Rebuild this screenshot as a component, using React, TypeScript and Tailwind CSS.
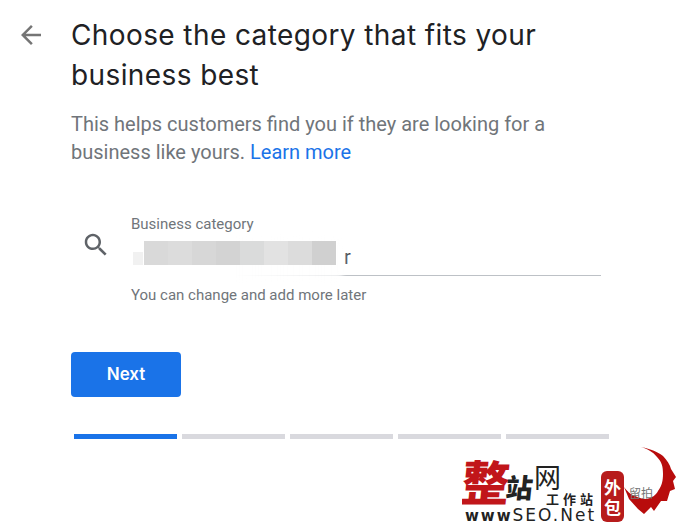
import React from "react";

const mosaicColors = [
  "bg-[#d9d9d9]",
  "bg-[#dcdcdc]",
  "bg-[#d7d7d7]",
  "bg-[#d3d3d3]",
  "bg-[#dadbdb]",
  "bg-[#e2e2e2]",
  "bg-[#dcdcdc]",
  "bg-[#d0d0d0]",
];

const steps = [true, false, false, false, false];

function Watermark() {
  return (
    <div className="absolute left-[462px] top-[446px] h-[79px] w-[214px] overflow-hidden">
      <span className="absolute left-[0px] top-[4px] -skew-x-6 font-['Noto_Sans_CJK_SC',serif] text-[48px] leading-[60px] font-black text-[#c1161a]">
        整
      </span>
      <span className="absolute left-[44px] top-[26px] -skew-x-6 font-['Noto_Sans_CJK_SC',serif] text-[27px] leading-[30px] font-black text-[#222]">
        站
      </span>
      <span className="absolute left-[72px] top-[15px] font-['Noto_Sans_CJK_SC',serif] text-[27px] leading-[32px] font-normal text-[#222]">
        网
      </span>
      <span className="absolute left-[84px] top-[45px] font-['Noto_Sans_CJK_SC',serif] text-[13px] leading-[16px] font-bold tracking-[4px] whitespace-nowrap text-[#222]">
        工作站
      </span>
      <span className="absolute left-[3px] top-[60px] font-['DejaVu_Sans',sans-serif] text-[17px] leading-[19px] tracking-[2px] whitespace-nowrap text-[#222]">
        <span className="text-[15px] font-bold">www</span>SEO.Net
      </span>
      <svg className="absolute left-[145px] top-[0px]" width="69" height="76" viewBox="0 0 69 76">
        <path
          d="M34 1 C44 3 51 6 56 10 C60 14 63 19 64 23 L69 31 L66 35 L68 43 L63 45 L60 55 L54 55 L47 65 L44 61 L37 68 L31 63 L22 53 L17 41 C20 45 24 49 28 50 C32 52 36 53 39 53 C45 52 49 49 51 45 C55 40 56 34 56 28 C56 21 55 16 50 11 C46 6 41 3 34 1 Z"
          fill="#b80c0c"
        />
      </svg>
      <div className="absolute left-[139px] top-[25px] flex h-[51px] w-[23px] flex-col items-center justify-center rounded-[6px] bg-[#b71c1c] font-['Noto_Sans_CJK_SC',sans-serif] text-[17px] leading-[20px] font-bold text-white">
        <span>外</span>
        <span>包</span>
      </div>
      <span className="absolute left-[167px] top-[40px] font-['Noto_Sans_CJK_SC',sans-serif] text-[12px] leading-[14px] whitespace-nowrap text-[#777]">
        留拍
      </span>
    </div>
  );
}

export default function App() {
  return (
    <div className="relative h-[529px] w-[682px] overflow-hidden bg-white font-['Roboto',sans-serif]">
      <div className="flex pt-[15px] pl-[16px]">
        <div className="w-[55px] pt-[5px]">
          <svg className="h-[30px] w-[30px] fill-[#757575]" viewBox="0 0 24 24">
            <path d="M20 11H7.83l5.59-5.59L12 4l-8 8 8 8 1.41-1.41L7.83 13H20v-2z" />
          </svg>
        </div>

        <div className="w-[540px]">
          <h1 className="font-['Inter',sans-serif] text-[28px] leading-[40px] font-normal tracking-[0.4px] text-[#202124]">
            Choose the category that fits your
            <br />
            business best
          </h1>

          <p className="mt-[15px] text-[20px] leading-[28px] text-[#70757a]">
            This helps customers find you if they are looking for a
            <br />
            business like yours. <span className="text-[#1a73e8]">Learn more</span>
          </p>

          {/* Category field */}
          <div className="mt-[48px] flex">
            <div className="w-[60px] pt-[16px] pl-[10px]">
              <svg className="h-[30px] w-[30px] fill-[#5f6368]" viewBox="0 0 24 24">
                <path d="M15.5 14h-.79l-.28-.27C15.41 12.59 16 11.11 16 9.5 16 5.91 13.09 3 9.5 3S3 5.91 3 9.5 5.91 16 9.5 16c1.61 0 3.09-.59 4.23-1.57l.27.28v.79l5 4.99L20.49 19l-4.99-5zm-6 0C7.01 14 5 11.99 5 9.5S7.01 5 9.5 5 14 7.01 14 9.5 11.99 14 9.5 14z" />
              </svg>
            </div>
            <div className="relative w-[470px]">
              <div className="text-[15px] leading-[20px] text-[#70757a]">Business category</div>
              <div className="h-[42px] border-b border-[#bdc1c6] pt-[10px] pl-[213px] text-[20px] leading-[26px] text-[#3c4043]">
                r
              </div>
              <div className="mt-[9px] text-[15px] leading-[20px] text-[#70757a]">
                You can change and add more later
              </div>

              {/* Blurred out value */}
              <div className="absolute top-[22px] -left-[10px] h-[46px] w-[224px] rounded-[14px] bg-gradient-to-r from-white via-white to-white/70 blur-[2px]" />
              <div className="absolute top-[38px] left-[2px] h-[13px] w-[10px] bg-[#f1f1f1]" />
              <div className="absolute top-[27px] left-[13px] flex h-[24px]">
                {mosaicColors.map((color, i) => (
                  <div key={i} className={`h-[24px] w-[24px] ${color}`} />
                ))}
              </div>
            </div>
          </div>

          <button className="mt-[47px] h-[45px] w-[110px] rounded-[4px] bg-[#1a73e8] font-['Inter',sans-serif] text-[17px] font-semibold text-white">
            Next
          </button>

          {/* Progress */}
          <div className="mt-[37px] ml-[3px] flex gap-[5px]">
            {steps.map((done, i) => (
              <div
                key={i}
                className={`h-[5px] w-[103px] ${done ? "bg-[#1a73e8]" : "bg-[#d9d9de]"}`}
              />
            ))}
          </div>
        </div>
      </div>

      <Watermark />
    </div>
  );
}
